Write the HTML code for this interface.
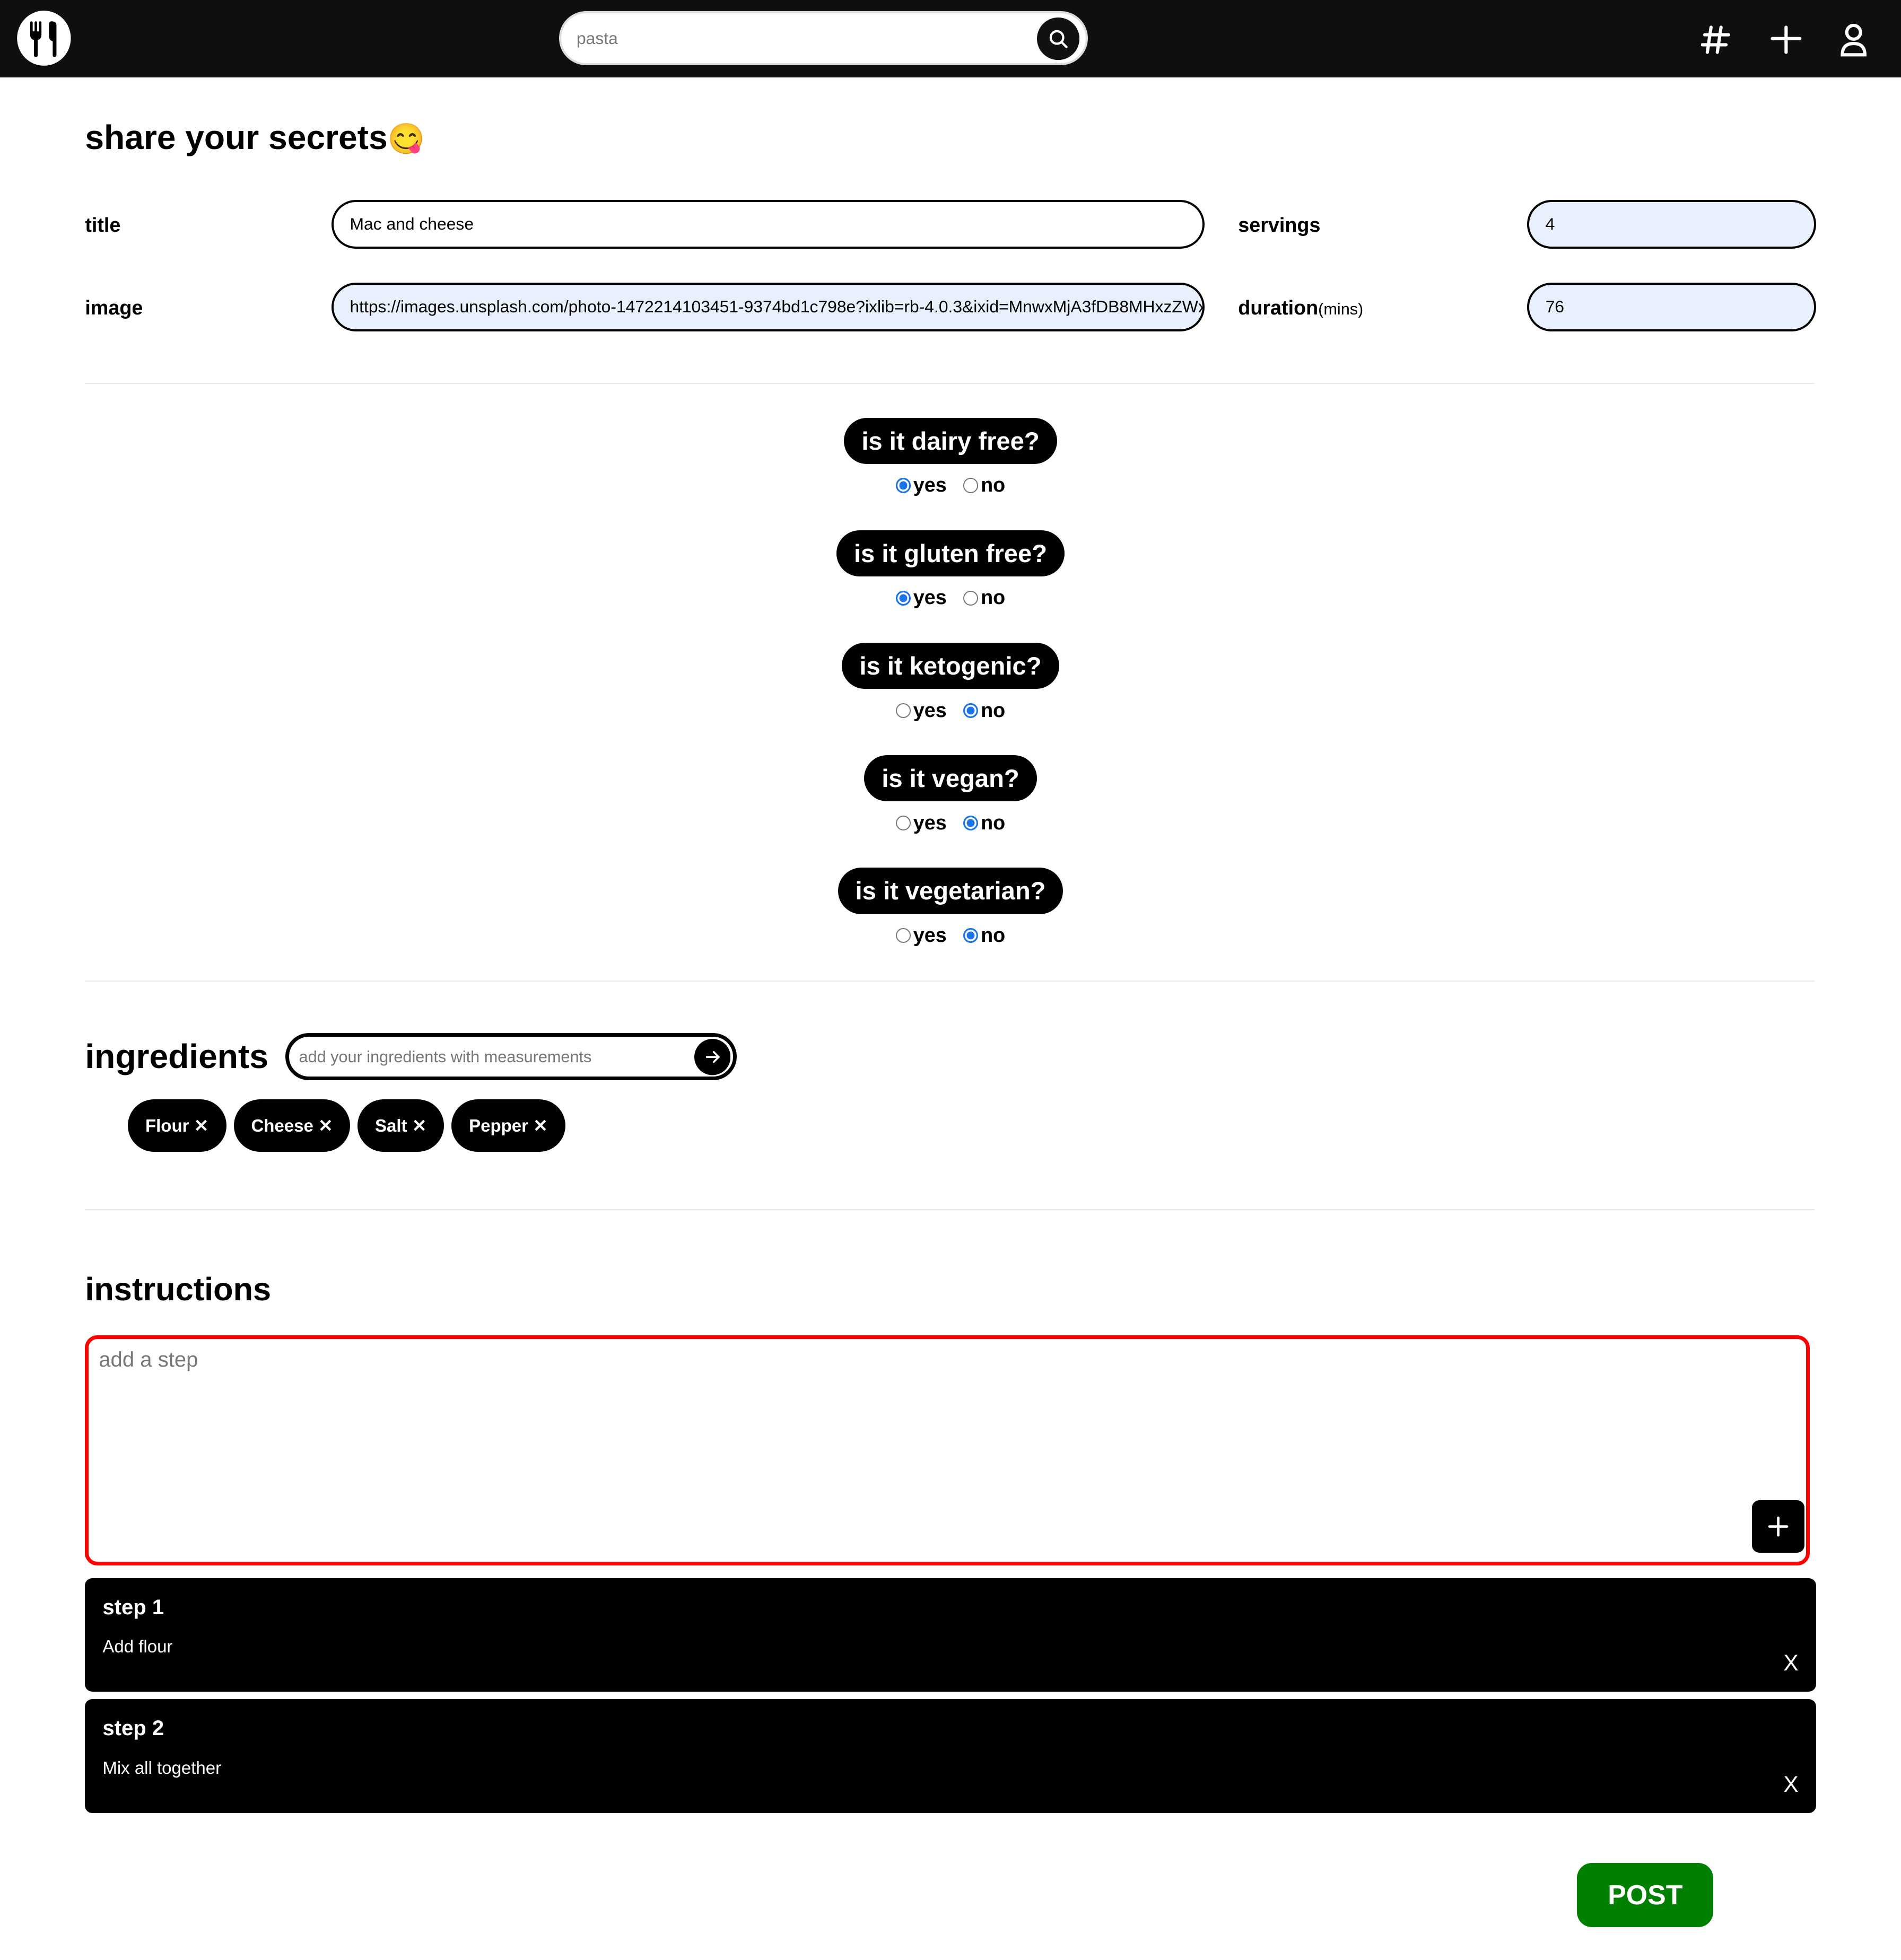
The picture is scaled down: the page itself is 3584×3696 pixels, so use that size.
<!DOCTYPE html>
<html><head><meta charset="utf-8"><style>
html{zoom:2.35789}
body{margin:0;width:1520px;height:1567.5px;position:relative;background:#fff;font-family:"Liberation Sans",Arial,sans-serif;color:#000;overflow:hidden}
.a{position:absolute}
.hdr{left:0;top:0;width:1520px;height:62px;background:#0f0f0f}
.lbl{font-weight:bold;font-size:16px}
.inp{box-sizing:border-box;height:39px;border:2px solid #000;border-radius:20px;font-size:13.5px;line-height:35px;padding-left:13px;white-space:nowrap;overflow:hidden}
.hr{left:68px;width:1383px;height:1px;background:#e8e8e8}
.q{left:0;width:1520px;text-align:center}
.pill{display:inline-block;background:#000;color:#fff;font-weight:bold;font-size:20px;height:37px;line-height:37px;padding:0 14px;border-radius:19px}
.rad{margin-top:7px;font-weight:bold;font-size:16px;line-height:20px}
.r{display:inline-block;width:12px;height:12px;border:1px solid #777;border-radius:50%;vertical-align:-1px;margin-right:2px;box-sizing:border-box}
.r.on{border:1.5px solid #1a73e8;background:#1a73e8;box-shadow:inset 0 0 0 1.5px #fff}
.chip{top:879px;height:42px;background:#000;color:#fff;border-radius:21px;font-weight:bold;font-size:14px;line-height:42px;text-align:center;box-sizing:border-box}
.step{left:68px;width:1384px;height:91px;background:#000;border-radius:6px;color:#fff}
.step b{position:absolute;left:14px;top:14px;font-size:17px}
.step span{position:absolute;left:14px;top:47px;font-size:14px}
.step i{position:absolute;right:14px;top:58px;font-style:normal;font-size:18px}
</style></head><body>
<div class="a hdr"></div>
<svg class="a" style="left:13px;top:8px" width="44" height="45" viewBox="0 0 44 45"><ellipse cx="22" cy="22.5" rx="21.5" ry="22" fill="#fff"/>
<g fill="#000"><rect x="11" y="9" width="2" height="10" rx="1"/><rect x="14.5" y="9" width="2" height="10" rx="1"/><rect x="18" y="9" width="2" height="10" rx="1"/><path d="M11 17h9v3q0 3-3 4v12q0 1.5-1.5 1.5t-1.5-1.5v-12q-3-1-3-4z"/><path d="M28 9q4 0 4 3v24q0 1.5-1.5 1.5t-1.5-1.5v-11q-3-1-3-4v-9q0-3 2-3z"/></g></svg>
<div class="a" style="left:447px;top:9px;width:423px;height:43px;background:#fff;border-radius:22px;border:2px solid #ddd;box-sizing:border-box"></div>
<div class="a" style="left:461px;top:23px;font-size:13.5px;color:#777">pasta</div>
<svg class="a" style="left:829px;top:14px" width="34" height="34" viewBox="0 0 34 34"><circle cx="17" cy="17" r="17" fill="#111"/><circle cx="16" cy="16" r="5" fill="none" stroke="#fff" stroke-width="1.8"/><path d="M19.6 19.6l4 4" stroke="#fff" stroke-width="1.8" stroke-linecap="round"/></svg>
<svg class="a" style="left:1360px;top:18px" width="136" height="28" viewBox="0 0 136 28" fill="none" stroke="#fff" stroke-width="2.6" stroke-linecap="round"><path d="M8 4l-3 20M16 4l-3 20M3 10h19M1 18h19"/><path d="M68 4v20M57 13h22"/><circle cx="122" cy="8" r="5.5"/><path d="M113 26q0-9 9-9t9 9z"/></svg>

<div class="a" style="left:68px;top:94px;font-size:27.2px;font-weight:bold">share your secrets<span style="font-size:24px">😋</span></div>

<div class="a lbl" style="left:68px;top:171px">title</div>
<div class="a inp" style="left:265px;top:160px;width:698px">Mac and cheese</div>
<div class="a lbl" style="left:990px;top:171px">servings</div>
<div class="a inp" style="left:1221px;top:160px;width:231px;background:#e8f0fe">4</div>
<div class="a lbl" style="left:68px;top:237px">image</div>
<div class="a inp" style="left:265px;top:226px;width:698px;background:#e8f0fe">https://images.unsplash.com/photo-1472214103451-9374bd1c798e?ixlib=rb-4.0.3&amp;ixid=MnwxMjA3fDB8MHxzZWxlY3Rpb258</div>
<div class="a lbl" style="left:990px;top:237px">duration<span style="font-weight:normal;font-size:13px">(mins)</span></div>
<div class="a inp" style="left:1221px;top:226px;width:231px;background:#e8f0fe">76</div>

<div class="a hr" style="top:306px"></div>
<div class="a q" style="top:334px"><span class="pill">is it dairy free?</span><div class="rad"><span class="r on"></span>yes &nbsp;&nbsp;<span class="r"></span>no</div></div>
<div class="a q" style="top:424px"><span class="pill">is it gluten free?</span><div class="rad"><span class="r on"></span>yes &nbsp;&nbsp;<span class="r"></span>no</div></div>
<div class="a q" style="top:514px"><span class="pill">is it ketogenic?</span><div class="rad"><span class="r"></span>yes &nbsp;&nbsp;<span class="r on"></span>no</div></div>
<div class="a q" style="top:604px"><span class="pill">is it vegan?</span><div class="rad"><span class="r"></span>yes &nbsp;&nbsp;<span class="r on"></span>no</div></div>
<div class="a q" style="top:694px"><span class="pill">is it vegetarian?</span><div class="rad"><span class="r"></span>yes &nbsp;&nbsp;<span class="r on"></span>no</div></div>
<div class="a hr" style="top:784px"></div>

<div class="a" style="left:68px;top:829px;font-size:27.2px;font-weight:bold">ingredients</div>
<div class="a" style="left:228px;top:826px;width:361px;height:38px;border:3px solid #000;border-radius:20px;box-sizing:border-box"></div>
<div class="a" style="left:239px;top:838px;font-size:13px;color:#777">add your ingredients with measurements</div>
<svg class="a" style="left:555px;top:831px" width="29" height="29" viewBox="0 0 29 29"><circle cx="14.5" cy="14.5" r="14.5" fill="#000"/><path d="M10 14.5h9M15.5 10.5l4 4-4 4" stroke="#fff" stroke-width="1.5" fill="none" stroke-linecap="round"/></svg>
<div class="a chip" style="left:102px;width:79px">Flour ✕</div>
<div class="a chip" style="left:187px;width:93px">Cheese ✕</div>
<div class="a chip" style="left:286px;width:69px">Salt ✕</div>
<div class="a chip" style="left:361px;width:91px">Pepper ✕</div>
<div class="a hr" style="top:967px"></div>

<div class="a" style="left:68px;top:1016px;font-size:26px;font-weight:bold">instructions</div>
<div class="a" style="left:68px;top:1068px;width:1379px;height:184px;border:3px solid #f00;border-radius:10px;box-sizing:border-box"></div>
<div class="a" style="left:79px;top:1078px;font-size:17px;color:#777">add a step</div>
<div class="a" style="left:1401px;top:1200px;width:42px;height:42px;background:#000;border-radius:6px"></div>
<svg class="a" style="left:1412px;top:1211px" width="20" height="20" viewBox="0 0 20 20"><path d="M10 3v14M3 10h14" stroke="#fff" stroke-width="2" stroke-linecap="round"/></svg>

<div class="a step" style="top:1262px"><b>step 1</b><span>Add flour</span><i>X</i></div>
<div class="a step" style="top:1359px"><b>step 2</b><span>Mix all together</span><i>X</i></div>

<div class="a" style="left:1261px;top:1490px;width:109px;height:51px;background:#008000;border-radius:12px;color:#fff;font-weight:bold;font-size:22px;line-height:51px;text-align:center">POST</div>
</body></html>
